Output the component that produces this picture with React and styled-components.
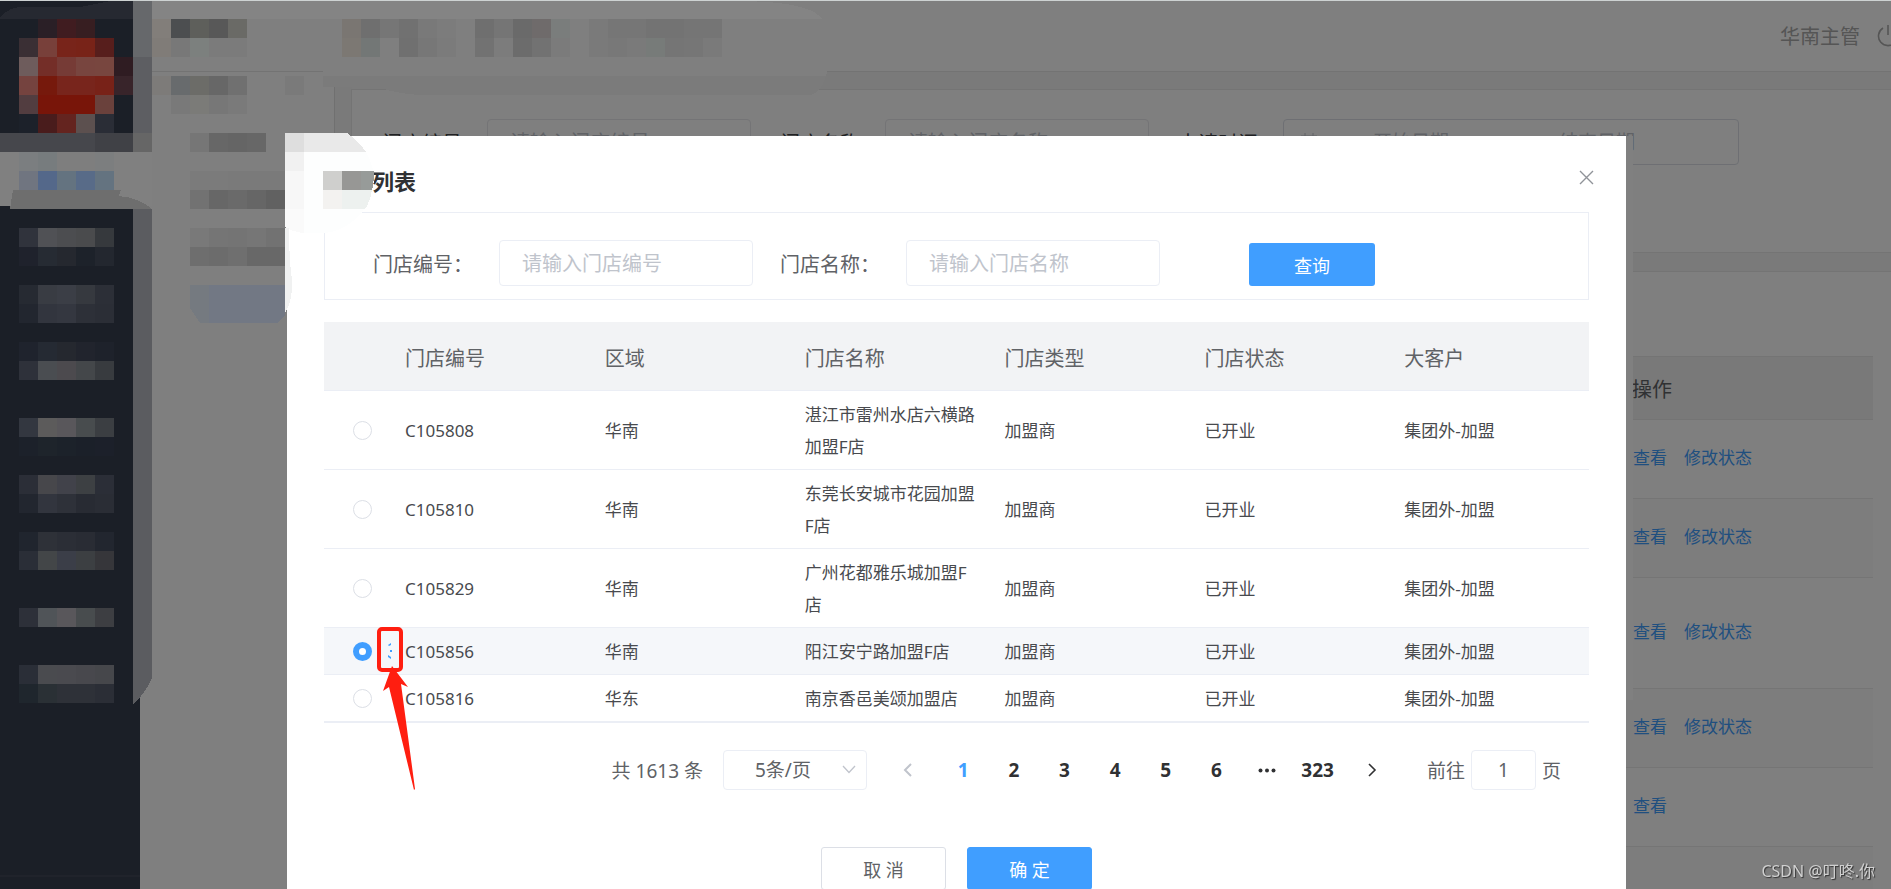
import React, { useState } from "react";
import styled, { createGlobalStyle } from "styled-components";

const STORES = [
  { code: "C105808", area: "华南", name: "湛江市雷州水店六横路加盟F店" },
  { code: "C105810", area: "华南", name: "东莞长安城市花园加盟F店" },
  { code: "C105829", area: "华南", name: "广州花都雅乐城加盟F店" },
  { code: "C105856", area: "华南", name: "阳江安宁路加盟F店" },
  { code: "C105816", area: "华东", name: "南京香邑美颂加盟店" },
];
const COLUMNS = ["门店编号", "区域", "门店名称", "门店类型", "门店状态", "大客户"];
const PAGES = ["1", "2", "3", "4", "5", "6", "more", "323"];
const ACTIONS = [
  { height: 79, links: ["查看", "修改状态"] },
  { height: 79, links: ["查看", "修改状态"] },
  { height: 111, links: ["查看", "修改状态"] },
  { height: 79, links: ["查看", "修改状态"] },
  { height: 79, links: ["查看"] },
  { height: 79, links: [] },
];

// runs of mosaic cells: [column, row, colours from left to right]
const CELL = 19;
const MOSAIC = [
  [2, 1, "#2a1f26 #401c20 #371e21"],
  [1, 2, "#3a2f34 #78403a #78241a #782318 #571e1c"],
  [1, 3, "#6e5c5c #742e28 #763b36 #78453f #78463f #2f1c22"],
  [1, 4, "#75433f #76190c #78251c #78251c #782218 #38242a"],
  [1, 5, "#523d40 #781509 #781509 #781509 #6a413c"],
  [1, 6, "#1c212a #491c1c #64241f #5c504f #2a2d36"],
  [0, 7, "#46474c #46474c #46474c #46474c #46474c #404146 #404146 #666666"],
  [1, 8, "#7b7e80 #777c7e #7e7e7e #7e7e7e #7c7e7f"],
  [1, 9, "#707580 #54688a #647380 #586b88 #647380"],
  [1, 12, "#30333c #505155 #4c4d50 #4a4b4d #36393d"],
  [1, 13, "#1f222c #262b33 #25282f #1d222a #23272f"],
  [1, 15, "#262a32 #393c43 #3b3e46 #36393f #2c2f37"],
  [1, 16, "#22262f #32353e #343740 #2d3038 #2b2e36"],
  [1, 18, "#1f232d #252a33 #25282f #21242d #1e222b"],
  [1, 19, "#2e313a #4a4d51 #4c4a4e #44474a #383b3f"],
  [1, 22, "#333740 #5c5b5b #59575b #484c4e #3b3e42"],
  [1, 23, "#1c212a #1e242b #1c222a #1b2029 #1c202a"],
  [1, 25, "#2b2e37 #47474b #41424a #3d4043 #2b2e37"],
  [1, 26, "#22262f #32353e #2e3139 #282b33 #2a2d35"],
  [1, 28, "#20252e #2e3138 #2b2e36 #292c34 #22262f"],
  [1, 29, "#2a2e37 #434648 #3b3e48 #3c3f42 #36363a"],
  [1, 32, "#2d3039 #505458 #59575b #484c4e #3d3e42"],
  [1, 35, "#2a2e37 #4a4b4f #4a4a4f #48484d #46474b"],
  [1, 36, "#1f262d #2a3035 #2e3138 #2e3138 #2b2e36"],
  [8, 1, "#827e7a #4c4e50 #5e5f5b #585858 #6a6a66"],
  [8, 2, "#807c78 #787878 #7c807e #7b7b7b #7b7b7b"],
  [8, 4, "#7d7b79 #686b6d #6c6c68 #676767 #707070"],
  [9, 5, "#797979 #7b7b78 #777777 #7a7a7a"],
  [15, 4, "#7a7a7a"],
  [10, 7, "#767676 #676767 #656565 #676767"],
  [10, 9, "#7b7b7b #7b7b7b #7a7a7a #7a7a7a #7a7a7a"],
  [10, 10, "#727272 #676767 #6a6a6a #666666 #616161"],
  [10, 12, "#797979 #757575 #747474 #767676 #727272"],
  [10, 13, "#6e6e6e #6c6c6c #6f6f6f #686868 #686868"],
  [18, 1, "#7a7672 #6f6f6f #767676 #717171 #797979 #7c7c7c"],
  [18, 2, "#7c7873 #737776 #7f7f7f #707070 #777777 #7b7b7b"],
  [25, 1, "#6f6f6f #757575 #6a6a6a #6f6b6b #7a7d7c"],
  [25, 2, "#727272 #7c7c7c #6c6c6c #727272 #7b7b7b"],
  [31, 1, "#7a7a7a #767676 #767676 #737373 #737373 #757575 #757575"],
  [31, 2, "#7a7a7a #787878 #7a7a7a #777b79 #757575 #767676 #7a7a7a"],
];

const StoreDialog = () => {
  const [selected, setSelected] = useState("C105856");

  return (
    <Dialog role="dialog" aria-labelledby="dialog-title">
      <DialogHeader>
        <DialogTitle id="dialog-title">列表</DialogTitle>
        <CloseButton type="button" aria-label="Close">
          <svg width="15" height="15" viewBox="0 0 15 15" fill="none" stroke="#909399">
            <path d="M1 1L14 14M14 1L1 14" strokeWidth="1.4" />
          </svg>
        </CloseButton>
      </DialogHeader>
      <SearchForm>
        <Field>
          <FieldLabel htmlFor="store-code">门店编号：</FieldLabel>
          <TextInput id="store-code" placeholder="请输入门店编号" />
        </Field>
        <Field>
          <FieldLabel htmlFor="store-name">门店名称：</FieldLabel>
          <TextInput id="store-name" placeholder="请输入门店名称" />
        </Field>
        <SearchButton type="button">查询</SearchButton>
      </SearchForm>
      <StoreTable>
        <colgroup>
          <RadioCol />
          {COLUMNS.slice(1).map((title) => (
            <DataCol key={title} />
          ))}
          <col />
        </colgroup>
        <thead>
          <tr>
            <th></th>
            {COLUMNS.map((title) => (
              <th key={title}>{title}</th>
            ))}
          </tr>
        </thead>
        <tbody>
          {STORES.map((store) => (
            <StoreRow key={store.code} $active={store.code === selected}>
              <td>
                <RadioLabel>
                  <Radio
                    name="store"
                    aria-label={store.code}
                    checked={store.code === selected}
                    onChange={() => setSelected(store.code)}
                  />
                  {store.code === selected && <Dots />}
                </RadioLabel>
              </td>
              <td>{store.code}</td>
              <td>{store.area}</td>
              <td>{store.name}</td>
              <td>加盟商</td>
              <td>已开业</td>
              <td>集团外-加盟</td>
            </StoreRow>
          ))}
        </tbody>
      </StoreTable>
      <Pagination />
      <DialogFooter>
        <FooterButton type="button">取 消</FooterButton>
        <FooterButton type="button" $primary>
          确 定
        </FooterButton>
      </DialogFooter>
    </Dialog>
  );
};

const Dots = () => (
  <DotsIcon width="4" height="16" viewBox="0 0 4 16" fill="#409eff">
    <path d="M0 2L3 0V2L1 3ZM2 7h2v2H2ZM0 12L3 14V16L0 14Z" />
  </DotsIcon>
);

const Pagination = () => (
  <PaginationBar>
    <Total>共 1613 条</Total>
    <SizeWrap>
      <SizeSelect aria-label="每页条数">
        <option>5条/页</option>
      </SizeSelect>
      <SizeArrow width="14" height="9" viewBox="0 0 14 9" fill="none" stroke="#c0c4cc">
        <path d="M1 1L7 7.500L13 1" strokeWidth="1.3" />
      </SizeArrow>
    </SizeWrap>
    <ArrowButton type="button" aria-label="prev" disabled>
      <svg width="9" height="14" viewBox="0 0 9 14" fill="none" stroke="#c0c4cc">
        <path d="M8 1L2 7L8 13" strokeWidth="2" />
      </svg>
    </ArrowButton>
    <Pager>
      {PAGES.map((page) => (
        <PageButton key={page} type="button" aria-label={page} $active={page === "1"}>
          {page === "more" ? (
            <svg width="18" height="5" viewBox="0 0 18 5" fill="#303133">
              <circle cx="2.500" cy="2.500" r="2" />
              <circle cx="9" cy="2.500" r="2" />
              <circle cx="15.500" cy="2.500" r="2" />
            </svg>
          ) : (
            page
          )}
        </PageButton>
      ))}
    </Pager>
    <ArrowButton type="button" aria-label="next">
      <svg width="9" height="14" viewBox="0 0 9 14" fill="none" stroke="#303133">
        <path d="M1 1L7 7L1 13" strokeWidth="1.600" />
      </svg>
    </ArrowButton>
    <Jump>
      前往
      <JumpInput aria-label="页码" defaultValue="1" />
      页
    </Jump>
  </PaginationBar>
);

const Mosaic = () => (
  <Overlay width="1891" height="889" viewBox="0 0 1891 889" shapeRendering="crispEdges">
    <path d="M0 0H110V1H0ZM285 0h1v1h-1Z" fill="#d9dede" />
    <path d="M110 0H285V1H110ZM286 0H735V1H286Z" fill="#808080" />
    <path d="M0 17C8 9 14 7 25 7H80L110 1H133V19H0Z" fill="#262931" />
    <path d="M133 1H152V133H133Z" fill="#5d5e62" />
    <path d="M133 0H152V57H133Z" fill="#66686b" />
    <path d="M0 152H152V206H0Z" fill="#808080" />
    <path d="M13 190H121L119 196C132 197 144 202 152 209H10Z" fill="#6e6e6e" />
    <path d="M133 209H152V678Q146 692 133 705Z" fill="#5b5c60" />
    <path d="M152 1H735Q810 1 822 19H152Z" fill="#848484" />
    <path d="M323 57H832L826 76H323Z" fill="#7f7f7f" />
    <path d="M323 76H826Q820 95 808 95H420Q400 94 384 89H352V87H323Z" fill="#7b7b7b" />
    {MOSAIC.map(([col, row, colors]) =>
      colors.split(" ").map((color, i) => (
        <rect
          key={`${row}-${col + i}`}
          x={(col + i) * CELL}
          y={row * CELL}
          width={CELL}
          height={CELL}
          fill={color}
        />
      ))
    )}
    <path d="M190 285H209V323H200L190 308Z" fill="#757a80" />
    <path d="M209 285H285V315L277 323H209Z" fill="#727884" />
    <path d="M285 133H347Q358 140 366 152Q374 166 374 180Q372 200 362 212Q345 232 323 233H304Q293 232 285 227Z" fill="#fdfefe" />
    <path d="M285 133H347Q358 140 366 152H285Z" fill="#e9e9e9" />
    <path d="M285 133H304V152H285Z" fill="#dedede" />
    <path d="M285 152H304V171H285Z" fill="#f1f1f1" />
    <path d="M285 171H304V209H285Z" fill="#f7f7f7" />
    <path d="M285 209H304V233Q293 232 285 227Z" fill="#fafafa" />
    <path d="M323 171H342V190H323Z" fill="#cfcfcd" />
    <path d="M342 171H361V190H342Z" fill="#979795" />
    <path d="M361 171H374Q374 182 372 190H361Z" fill="#979b99" />
    <path d="M323 190H342V209H323Z" fill="#f3f2f0" />
    <path d="M342 190H372Q370 202 365 209H342Z" fill="#edf1ef" />
    <path d="M285 228H289Q289 260 292 280Q293 300 285 313Z" fill="#f0f1f1" />
    <path d="M1626 136H1633V700H1626Z" fill="#808080" />
  </Overlay>
);

const Marker = () => (
  <Overlay width="450" height="889" viewBox="0 0 450 889">
    <rect x="379" y="629" width="22" height="41" rx="3" fill="none" stroke="#ff1e10" strokeWidth="4" />
    <path d="M392 666L408 687L401 684L415 789L414 790L389 687L383 691Z" fill="#ff1e10" />
  </Overlay>
);

const App = () => {
  return (
    <>
      <GlobalStyle />
      <Page>
        <Sidebar>
          <SidebarFoot />
        </Sidebar>
        <Workspace>
          <TopBar>
            <span>华南主管</span>
            <svg width="22" height="22" viewBox="0 0 22 22" fill="none" stroke="#aaa" strokeWidth="1.600">
              <path d="M6 3A9.500 9.500 0 1 0 16 3M11 0V10" />
            </svg>
          </TopBar>
          <Body>
            <SubMenu />
            <Main>
              <FilterCard>
                <Field>
                  <PageLabel htmlFor="page-code">门店编号</PageLabel>
                  <PageInput id="page-code" placeholder="请输入门店编号" />
                </Field>
                <Field>
                  <PageLabel htmlFor="page-name">门店名称</PageLabel>
                  <PageInput id="page-name" placeholder="请输入门店名称" />
                </Field>
                <Field>
                  <PageLabel htmlFor="page-start">申请时间</PageLabel>
                  <DateRange>
                    <svg width="18" height="18" viewBox="0 0 18 18" fill="none" stroke="#c0c4cc">
                      <path d="M1 3H17V17H1ZM5 0V5M13 0V5M1 8H17" />
                    </svg>
                    <DateInput id="page-start" placeholder="开始日期" />
                    <DateInput aria-label="结束日期" placeholder="结束日期" />
                  </DateRange>
                </Field>
              </FilterCard>
              <ListCard>
                <ActionTable>
                  <thead>
                    <tr>
                      <th>操作</th>
                    </tr>
                  </thead>
                  <tbody>
                    {ACTIONS.map((row, i) => (
                      <ActionRow key={i} $height={row.height} $striped={i % 2 === 1}>
                        <td>
                          {row.links.map((text) => (
                            <ActionLink key={text} href="#">
                              {text}
                            </ActionLink>
                          ))}
                        </td>
                      </ActionRow>
                    ))}
                  </tbody>
                </ActionTable>
              </ListCard>
            </Main>
          </Body>
        </Workspace>
      </Page>
      <Mask>
        <StoreDialog />
        <Mosaic />
        <Marker />
        <Watermark>CSDN @叮咚.你</Watermark>
      </Mask>
    </>
  );
};

const GlobalStyle = createGlobalStyle`
  * {
    box-sizing: border-box;
  }
  body {
    margin: 0;
    overflow: hidden;
    color: #606266;
    font-size: 20px;
    font-family: "Noto Sans", "Noto Sans CJK SC", sans-serif;
  }
  button, input, select {
    font-family: inherit;
  }
`;
const Page = styled.div`
  display: flex;
  height: 100vh;
  overflow: hidden;
  background-color: white;
`;
const Sidebar = styled.aside`
  flex: 0 0 140px;
  display: flex;
  flex-direction: column;
  justify-content: flex-end;
  background-color: #363e4e;
`;
const SidebarFoot = styled.div`
  height: 14px;
  border-top: 2px solid #404756;
`;
const Workspace = styled.div`
  flex: 1;
  min-width: 0;
  display: flex;
  flex-direction: column;
`;
const TopBar = styled.header`
  display: flex;
  flex: 0 0 72px;
  align-items: center;
  justify-content: flex-end;
  gap: 17px;
  margin-right: -8px;
  color: #aaa;
  border-bottom: 1px solid #e6e6e6;
`;
const Body = styled.div`
  display: flex;
  flex: 1;
`;
const SubMenu = styled.nav`
  flex: 0 0 195px;
  border-right: 1px solid #e0e0e0;
`;
const Main = styled.main`
  flex: 1;
  min-width: 0;
  display: flex;
  flex-direction: column;
  gap: 18px;
  padding: 17px 0 0 16px;
  background-color: #f5f5f5;
`;
const FilterCard = styled.section`
  display: flex;
  align-items: flex-start;
  height: 164px;
  padding: 29px 30px;
  gap: 29px;
  background-color: white;
  border: 1px solid #e8e8e8;
  border-right: none;
`;
const ListCard = styled.section`
  flex: 1;
  padding-top: 84px;
  background-color: white;
  border-top: 1px solid #e8e8e8;
`;
const Field = styled.div`
  display: flex;
  align-items: center;
`;
const PageLabel = styled.label`
  width: 105px;
  color: #404246;
`;
const PageInput = styled.input`
  width: 264px;
  height: 46px;
  padding: 0 22px;
  font-size: 20px;
  border: 1px solid #e8e8ec;
  border-radius: 4px;
  &::placeholder {
    color: #c0c4cc;
  }
`;
const DateRange = styled.div`
  display: flex;
  align-items: center;
  gap: 20px;
  width: 456px;
  height: 46px;
  padding: 0 16px;
  border: 1px solid #dcdfe6;
  border-radius: 4px;
`;
const DateInput = styled.input`
  width: 146px;
  padding: 0;
  font-size: 19px;
  text-align: center;
  border: none;
  & + & {
    margin-left: 20px;
  }
  &::placeholder {
    color: #c0c4cc;
  }
`;
const ActionTable = styled.table`
  width: calc(100% - 18px);
  border-spacing: 0;
  th {
    height: 64px;
    padding: 0 0 0 1281px;
    font-weight: 400;
    text-align: left;
    background-color: #f2f2f2;
    border-top: 1px solid #e8e8e8;
    border-bottom: 1px solid #e8e8e8;
  }
`;
const ActionRow = styled.tr`
  background-color: ${(props) => (props.$striped ? "#fafafa" : "white")};
  td {
    height: ${(props) => props.$height}px;
    padding: 0 0 2px 1282px;
    font-size: 17px;
    line-height: 24px;
    border-bottom: 1px solid #ebebeb;
  }
`;
const ActionLink = styled.a`
  margin-right: 17px;
  color: #409eff;
  text-decoration: none;
`;
const Mask = styled.div`
  position: fixed;
  inset: 0;
  display: flex;
  align-items: flex-start;
  padding: 135px 265px 0 287px;
  overflow: hidden;
  background-color: rgba(0, 0, 0, 0.5);
  border-top: 1px solid #cdd2d2;
`;
const Overlay = styled.svg`
  position: absolute;
  top: -1px;
  left: 0;
  pointer-events: none;
`;
const Watermark = styled.span`
  position: absolute;
  right: 16px;
  bottom: 6px;
  color: #d0d0d0;
  font-size: 16px;
  line-height: 24px;
  text-shadow: 1px 1px 1px #333;
`;
const Dialog = styled.section`
  flex: 1;
  min-width: 0;
  padding: 0 37px 40px;
  background-color: white;
`;
const DialogHeader = styled.header`
  display: flex;
  align-items: flex-start;
  justify-content: space-between;
  height: 76px;
  padding: 31px 0 0 48px;
`;
const DialogTitle = styled.h2`
  margin: 0;
  color: #303133;
  font-size: 22px;
  line-height: 28px;
`;
const CloseButton = styled.button`
  display: flex;
  padding: 0;
  margin: 3px -5px 0 0;
  border: none;
  background: none;
`;
const SearchForm = styled.form`
  display: flex;
  align-items: flex-end;
  gap: 27px;
  height: 88px;
  padding: 0 48px 13px;
  border: 1px solid #ebeef5;
`;
const FieldLabel = styled.label`
  width: 126px;
`;
const TextInput = styled.input`
  width: 254px;
  height: 46px;
  padding: 0 22px;
  font-size: 20px;
  border: 1px solid #ebeef5;
  border-radius: 4px;
  &::placeholder {
    color: #c0c4cc;
  }
`;
const SearchButton = styled.button`
  width: 126px;
  height: 43px;
  margin-left: 62px;
  color: white;
  font-size: 18px;
  border: none;
  border-radius: 3px;
  background-color: #409eff;
`;
const StoreTable = styled.table`
  width: 100%;
  margin-top: 22px;
  table-layout: fixed;
  border-spacing: 0;
  border-bottom: 1px solid #ebeef5;
  th,
  td {
    padding: 8px 12px 6px;
    text-align: left;
    border-bottom: 1px solid #ebeef5;
  }
  th {
    height: 69px;
    font-weight: 400;
    background-color: #f2f3f5;
  }
  td {
    color: #484a4e;
    font-size: 17px;
    line-height: 32px;
  }
`;
const RadioCol = styled.col`
  width: 69px;
`;
const DataCol = styled.col`
  width: 15.8%;
`;
const StoreRow = styled.tr`
  background-color: ${(props) => (props.$active ? "#f5f7fa" : "white")};
`;
const RadioLabel = styled.label`
  display: flex;
  align-items: center;
  gap: 16px;
  height: 32px;
  padding: 0 0 2px 17px;
`;
const Radio = styled.input.attrs({ type: "radio" })`
  flex: none;
  width: 19px;
  height: 19px;
  margin: 0;
  appearance: none;
  border: 1px solid #dcdfe6;
  border-radius: 50%;
  background-color: white;
  &:checked {
    border: 6px solid #409eff;
  }
`;
const DotsIcon = styled.svg`
  flex: none;
`;
const PaginationBar = styled.div`
  display: flex;
  align-items: center;
  justify-content: flex-end;
  height: 40px;
  margin-top: 27px;
  padding-right: 28px;
  font-size: 19px;
`;
const Total = styled.span`
  margin-right: 20px;
`;
const SizeWrap = styled.div`
  position: relative;
`;
const SizeSelect = styled.select`
  display: block;
  width: 144px;
  height: 40px;
  padding: 0 31px;
  color: #606266;
  font-size: 19px;
  appearance: none;
  border: 1px solid #ebeef5;
  border-radius: 4px;
  background-color: white;
`;
const SizeArrow = styled.svg`
  position: absolute;
  top: 15px;
  right: 11px;
  pointer-events: none;
`;
const ArrowButton = styled.button`
  display: flex;
  align-items: center;
  justify-content: center;
  width: 60px;
  height: 40px;
  padding: 0;
  border: none;
  background: none;
  &:disabled {
    margin-left: 11px;
  }
`;
const Pager = styled.div`
  display: grid;
  grid-template-columns: repeat(8, 1fr);
  width: 405px;
`;
const PageButton = styled.button`
  display: flex;
  align-items: center;
  justify-content: center;
  height: 40px;
  padding: 0;
  color: ${(props) => (props.$active ? "#409eff" : "#303133")};
  font-size: 19px;
  font-weight: 700;
  border: none;
  background: none;
`;
const Jump = styled.label`
  display: flex;
  align-items: center;
  gap: 6px;
  margin-left: 24px;
`;
const JumpInput = styled.input`
  width: 65px;
  height: 40px;
  color: #606266;
  font-size: 19px;
  text-align: center;
  border: 1px solid #ebeef5;
  border-radius: 4px;
`;
const DialogFooter = styled.footer`
  display: flex;
  justify-content: center;
  gap: 21px;
  margin-top: 57px;
`;
const FooterButton = styled.button`
  width: 125px;
  height: 43px;
  color: ${(props) => (props.$primary ? "white" : "#606266")};
  font-size: 18px;
  border: 1px solid ${(props) => (props.$primary ? "#409eff" : "#dcdfe6")};
  border-radius: 3px;
  background-color: ${(props) => (props.$primary ? "#409eff" : "white")};
`;

export default App;
